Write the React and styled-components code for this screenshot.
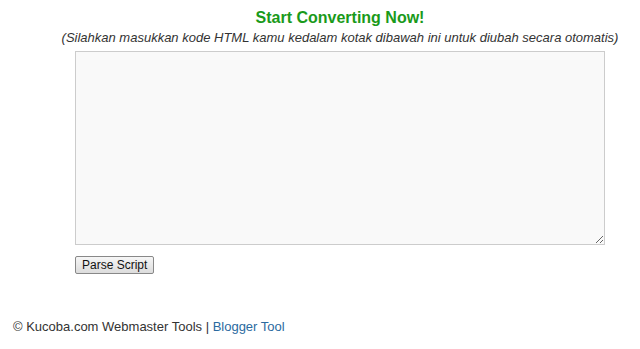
import React from 'react';
import styled, { createGlobalStyle } from 'styled-components';

const GlobalStyle = createGlobalStyle`
    body {
        margin: 0;
        background: #fff;
        font-family: "Liberation Sans", Arial, sans-serif;
        color: #333;
    }
`;

const Page = styled.div`
    display: flex;
    flex-direction: column;
    min-height: 349px;
`;

const Main = styled.div`
    width: 560px;
    margin-left: 60px;
    padding-top: 8px;
    display: flex;
    flex-direction: column;
    align-items: center;
`;

const Title = styled.h2`
    margin: 0;
    font-size: 16px;
    font-weight: bold;
    color: #1a9a1a;
    line-height: 19px;
`;

const Hint = styled.p`
    margin: 3px 0 0;
    font-size: 13px;
    font-style: italic;
    color: #333;
    line-height: 16px;
`;

const Form = styled.div`
    width: 530px;
    margin-top: 5px;
    display: flex;
    flex-direction: column;
    align-items: flex-start;
`;

const Code = styled.textarea`
    box-sizing: border-box;
    width: 530px;
    height: 194px;
    background: #f9f9f9;
    border: 1px solid #ccc;
    margin: 0;
    padding: 2px;
    font-family: "Liberation Mono", monospace;
    font-size: 12px;
`;

const Button = styled.button`
    margin-top: 11px;
    height: 18px;
    padding: 0 6px;
    font-family: "Liberation Sans", Arial, sans-serif;
    font-size: 12px;
    color: #111;
    background: linear-gradient(#f6f6f6, #dcdcdc);
    border: 1px solid #888;
    border-radius: 2px;
`;

const Footer = styled.div`
    margin-top: 45px;
    padding-left: 13px;
    font-size: 13px;
    line-height: 16px;
    color: #333;
`;

const Link = styled.a`
    color: #2b6aa0;
    text-decoration: none;
`;

export default function App() {
    return (
        <Page>
            <GlobalStyle />
            <Main>
                <Title>Start Converting Now!</Title>
                <Hint>(Silahkan masukkan kode HTML kamu kedalam kotak dibawah ini untuk diubah secara otomatis)</Hint>
                <Form>
                    <Code />
                    <Button>Parse Script</Button>
                </Form>
            </Main>
            <Footer>
                © Kucoba.com Webmaster Tools | <Link href="#">Blogger Tool</Link>
            </Footer>
        </Page>
    );
}
